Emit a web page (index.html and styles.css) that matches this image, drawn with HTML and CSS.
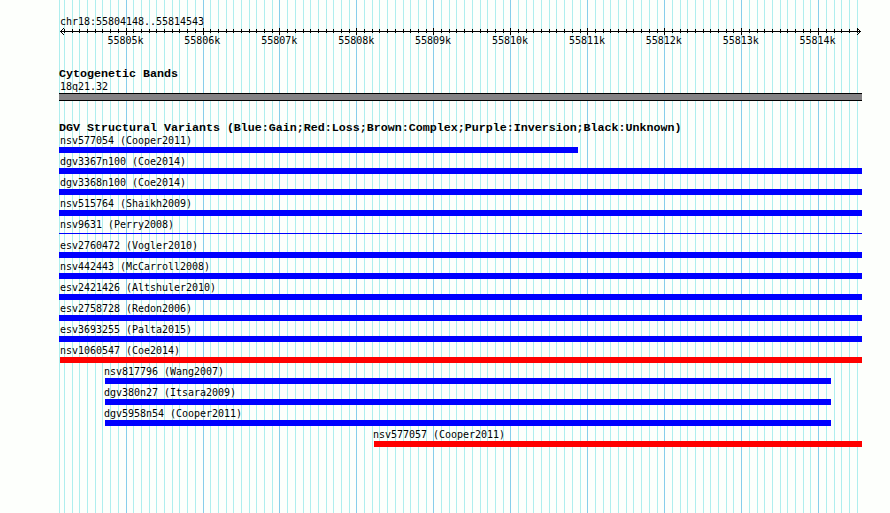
FILE: index.html
```html
<!DOCTYPE html>
<html lang="en">
  <head>
    <meta charset="UTF-8" />
    <title>chr18:55804148..55814543</title>
    <link rel="stylesheet" href="styles.css">
  </head>
  <body>
    <div class="browser">
      <svg class="grid" width="890" height="513" shape-rendering="crispEdges"></svg>

      <header class="ruler">
        <div class="region">chr18:55804148..55814543</div>
        <svg class="axis" width="803" height="9" shape-rendering="crispEdges">
          <path class="arrow" d="M1 4.5H802M4.5 1v1M3.5 2v1M2.5 3v1M1.5 4v1M2.5 5v1M3.5 6v1M4.5 7v1M798.5 1v1M799.5 2v1M800.5 3v1M801.5 4v1M800.5 5v1M799.5 6v1M798.5 7v1" />
        </svg>
        <div class="scale">
          <span>55805k</span><span>55806k</span><span>55807k</span><span>55808k</span><span>55809k</span><span>55810k</span><span>55811k</span><span>55812k</span><span>55813k</span><span>55814k</span>
        </div>
      </header>

      <section class="bands">
        <h2>Cytogenetic Bands</h2>
        <div class="label">18q21.32</div>
        <div class="band"></div>
      </section>

      <section class="variants">
        <h2>DGV Structural Variants (Blue:Gain;Red:Loss;Brown:Complex;Purple:Inversion;Black:Unknown)</h2>
        <div class="variant short"><div class="label">nsv577054 (Cooper2011)</div><div class="bar gain"></div></div>
        <div class="variant"><div class="label">dgv3367n100 (Coe2014)</div><div class="bar gain"></div></div>
        <div class="variant"><div class="label">dgv3368n100 (Coe2014)</div><div class="bar gain"></div></div>
        <div class="variant"><div class="label">nsv515764 (Shaikh2009)</div><div class="bar gain"></div></div>
        <div class="variant"><div class="label">nsv9631 (Perry2008)</div><div class="bar thin"></div></div>
        <div class="variant"><div class="label">esv2760472 (Vogler2010)</div><div class="bar gain"></div></div>
        <div class="variant"><div class="label">nsv442443 (McCarroll2008)</div><div class="bar gain"></div></div>
        <div class="variant"><div class="label">esv2421426 (Altshuler2010)</div><div class="bar gain"></div></div>
        <div class="variant"><div class="label">esv2758728 (Redon2006)</div><div class="bar gain"></div></div>
        <div class="variant"><div class="label">esv3693255 (Palta2015)</div><div class="bar gain"></div></div>
        <div class="variant inset"><div class="label">nsv1060547 (Coe2014)</div><div class="bar loss"></div></div>
        <div class="variant middle"><div class="label">nsv817796 (Wang2007)</div><div class="bar gain"></div></div>
        <div class="variant middle"><div class="label">dgv380n27 (Itsara2009)</div><div class="bar gain"></div></div>
        <div class="variant middle"><div class="label">dgv5958n54 (Cooper2011)</div><div class="bar gain"></div></div>
        <div class="variant late"><div class="label">nsv577057 (Cooper2011)</div><div class="bar loss"></div></div>
      </section>
    </div>

    <script>
      const left = 59
      const grid = document.querySelector('.grid')
      const axis = document.querySelector('.axis')

      function addLine(svg, className, x, y1, y2) {
        const line = document.createElementNS('http://www.w3.org/2000/svg', 'path')
        line.setAttribute('class', className)
        line.setAttribute('d', `M${x + 0.5} ${y1}V${y2}`)
        svg.append(line)
      }

      // one line every 100 bases, a major one every 1000
      addLine(grid, 'minor', left, 0, 513)
      for (let i = -8; i <= 95; i++) {
        const x = Math.floor(126.06 + i * 7.695)
        const major = i % 10 === 0
        addLine(grid, major ? 'major' : 'minor', x, 0, 513)
        addLine(axis, 'tick', x - left, major ? 1 : 2, major ? 8 : 6)
      }
    </script>
  </body>
</html>
```
FILE: styles.css
```css
body {
  margin: 0;
  background-color: #fdfffc;
  color: #000;
  font-family: "DejaVu Sans Mono", "Liberation Mono", monospace;
  font-size: 10px;
  letter-spacing: -0.02px;
}

.browser {
  position: relative;
  box-sizing: border-box;
  width: 890px;
  height: 513px;
  padding: 15px 28px 0 59px;
  overflow: hidden;
}

/* grid lines behind all tracks */
.grid {
  position: absolute;
  top: 0;
  left: 0;
  z-index: -1;
}
.grid path,
.axis path {
  fill: none;
  stroke-width: 1;
}
.grid .minor {
  stroke: #afeeee;
}
.grid .major {
  stroke: #87ceeb;
}
.axis .arrow,
.axis .tick {
  stroke: #000;
}

.ruler {
  height: 53px;
}
.region {
  height: 12px;
  padding-left: 1px;
  line-height: 13px;
  white-space: pre;
}
.axis {
  display: block;
}
.scale {
  display: flex;
  width: 769px;
  margin-left: 28px;
  line-height: 10px;
}
.scale span {
  flex: 1;
  text-align: center;
}

h2 {
  height: 12px;
  margin: 0;
  font-family: "Liberation Mono", monospace;
  font-size: 11.667px;
  letter-spacing: 0;
  line-height: 12px;
  white-space: nowrap;
}
.label {
  height: 13px;
  padding-left: 1px;
  line-height: 13px;
  white-space: nowrap;
}

.bands {
  height: 54px;
}
.band {
  box-sizing: border-box;
  height: 8px;
  border: 1px solid #000;
  border-width: 1px 0;
  background-color: #848284;
}

.variant {
  height: 21px;
}
.bar {
  height: 6px;
}
.gain {
  background-color: #00f;
}
.loss {
  background-color: #f00;
}
.thin {
  height: 1px;
  margin-top: 2px;
  background-color: #00f;
}

/* extents of the variants that don't span the whole region */
.short .bar {
  width: 519px;
}
.inset .bar {
  margin-left: 1px;
}
.middle {
  width: 726px;
  margin-left: 46px;
}
.late {
  margin-left: 315px;
}
.middle .label,
.late .label {
  margin-left: -2px;
}
```
